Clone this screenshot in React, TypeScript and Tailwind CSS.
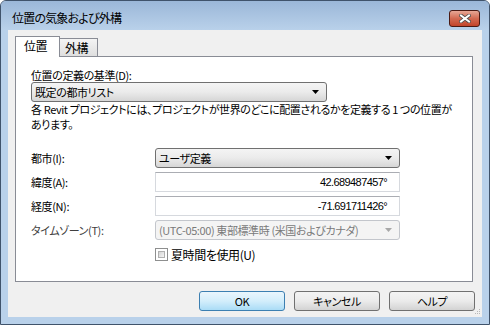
const jp = "font-['Noto_Sans_CJK_JP',sans-serif] [font-feature-settings:'palt']"

function Arrow({ color = '#000' }: { color?: string }) {
  return (
    <svg width="7" height="4" viewBox="0 0 7 4">
      <path d="M0 0H7L3.5 4Z" fill={color} />
    </svg>
  )
}

function Combo({ text, width, disabled }: { text: string; width: string; disabled?: boolean }) {
  return (
    <div
      className={[
        'h-[20px] rounded-[3px] border flex items-center justify-between pl-[3px] pr-[7px] overflow-hidden',
        width,
        disabled
          ? 'border-[#c3c6cc] bg-[#f4f4f4] text-[#7a7a7a]'
          : 'border-[#707070] bg-gradient-to-b from-[#f4f4f4] via-[#ebebeb] to-[#d6d6d6] text-black',
      ].join(' ')}
    >
      <span className="leading-[13px] whitespace-nowrap">{text}</span>
      <Arrow color={disabled ? '#a8a8a8' : '#000'} />
    </div>
  )
}

function Field({ value }: { value: string }) {
  return (
    <div className="w-[245px] h-[20px] border border-[#d6d9de] border-t-[#abadb3] bg-white flex items-center justify-end pr-[12px]">
      <span className="font-['Liberation_Sans',sans-serif] text-[11px] tracking-[-0.6px] leading-[13px]">{value}</span>
    </div>
  )
}

function Btn({ label, primary }: { label: string; primary?: boolean }) {
  return (
    <div
      className={[
        'w-[86px] h-[20px] rounded-[3px] border flex items-center justify-center leading-[13px]',
        primary
          ? 'border-[#3c7fb1] bg-gradient-to-b from-[#eaf6fd] via-[#d3eefb] to-[#aadcf6]'
          : 'border-[#707070] bg-gradient-to-b from-[#f3f3f3] via-[#ebebeb] to-[#d3d3d3]',
      ].join(' ')}
    >
      {label}
    </div>
  )
}

export default function App() {
  return (
    <div className={`w-[490px] h-[325px] bg-white text-[11px] tracking-[-0.4px] text-black ${jp}`}>
      <div className="w-[490px] h-[325px] flex flex-col rounded-t-[6px] border border-[#40536b] bg-[#b9d1ea] overflow-hidden">
        {/* title bar */}
        <div className="h-[29px] flex items-start pt-[9px] pl-[11px] bg-gradient-to-b from-[#9bb7d8] to-[#b9d1ea]">
          <span className="text-[12px] tracking-[-0.8px] leading-[16px]">位置の気象および外構</span>
          <div className="ml-auto mr-[9px] w-[31px] h-[17px] rounded-[3px] border border-[#4a1a14] bg-gradient-to-b from-[#e6a796] via-[#d26a52] to-[#c24329] flex items-center justify-center">
            <svg width="12" height="9" viewBox="0 0 12 9">
              <path d="M2 1.5L10 7.5M10 1.5L2 7.5" stroke="#4d4d4d" strokeWidth="3.6" strokeLinecap="square" />
              <path d="M2 1.5L10 7.5M10 1.5L2 7.5" stroke="#fff" strokeWidth="2" strokeLinecap="square" />
            </svg>
          </div>
        </div>

        {/* client area */}
        <div className="relative mx-[7px] h-[287px] bg-[#f0f0f0] px-[7px] pt-[6px] flex flex-col">
          <div className="relative z-10 h-[21px] -mb-[1px] flex">
            <div className="w-[45px] h-[21px] border-l border-t border-r border-[#898c95] bg-white pl-[8px] pt-[2px] leading-[13px] text-[12px]">
              位置
            </div>
            <div className="mt-[2px] w-[38px] h-[18px] border-t border-r border-[#898c95] bg-gradient-to-b from-[#f4f4f4] to-[#dfdfdf] pl-[5px] pt-[2px] leading-[13px] text-[12px]">
              外構
            </div>
          </div>

          <div className="w-[458px] h-[226px] border border-[#898c95] bg-white px-[15px] pt-[12px] flex flex-col">
            <div className="h-[13px] leading-[13px]">位置の定義の基準(D):</div>
            <Combo text="既定の都市リスト" width="w-[296px]" />
            <div className="leading-[15px] whitespace-nowrap">
              各 Revit プロジェクトには、プロジェクトが世界のどこに配置されるかを定義する 1 つの位置が
              <br />
              あります。
            </div>

            <div className="mt-[16px] flex flex-col gap-[4px]">
              <div className="h-[20px] flex items-center">
                <span className="w-[124px] leading-[13px]">都市(I):</span>
                <Combo text="ユーザ定義" width="w-[245px]" />
              </div>
              <div className="h-[20px] flex items-center">
                <span className="w-[124px] leading-[13px]">緯度(A):</span>
                <Field value="42.689487457°" />
              </div>
              <div className="h-[20px] flex items-center">
                <span className="w-[124px] leading-[13px]">経度(N):</span>
                <Field value="-71.691711426°" />
              </div>
              <div className="h-[20px] flex items-center">
                <span className="w-[124px] leading-[13px] text-[#404040]">タイムゾーン(T):</span>
                <Combo text="(UTC-05:00) 東部標準時 (米国およびカナダ)" width="w-[245px]" disabled />
              </div>
            </div>

            <div className="mt-[8px] pl-[124px] flex items-center gap-[3px]">
              <div className="w-[13px] h-[13px] border border-[#8e8f8f] bg-white p-[2px]">
                <div className="w-full h-full border border-[#b0b0b0] bg-gradient-to-br from-[#d3d3d3] to-[#f6f6f6]" />
              </div>
              <span className="leading-[13px] text-[12px]">夏時間を使用(U)</span>
            </div>
          </div>

          <div className="mt-[9px] flex justify-end gap-[9px]">
            <Btn label="OK" primary />
            <Btn label="キャンセル" />
            <Btn label="ヘルプ" />
          </div>

          <svg className="absolute right-[1px] bottom-[2px]" width="7" height="7" viewBox="0 0 7 7">
            <rect x="5" y="1" width="1" height="1" fill="#b8b8b8" />
            <rect x="3" y="3" width="1" height="1" fill="#b8b8b8" />
            <rect x="5" y="3" width="1" height="1" fill="#b8b8b8" />
            <rect x="1" y="5" width="1" height="1" fill="#b8b8b8" />
            <rect x="3" y="5" width="1" height="1" fill="#b8b8b8" />
            <rect x="5" y="5" width="1" height="1" fill="#b8b8b8" />
          </svg>
        </div>
      </div>
    </div>
  )
}
